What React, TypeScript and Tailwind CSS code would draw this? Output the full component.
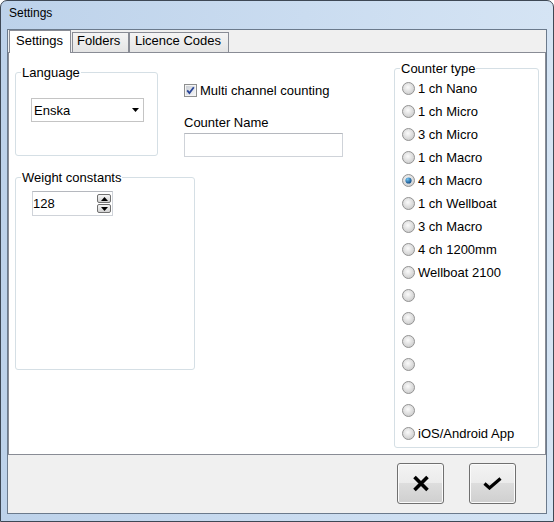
import type { ReactNode } from "react";

const COUNTERS = [
  "1 ch Nano",
  "1 ch Micro",
  "3 ch Micro",
  "1 ch Macro",
  "4 ch Macro",
  "1 ch Wellboat",
  "3 ch Macro",
  "4 ch 1200mm",
  "Wellboat 2100",
  "",
  "",
  "",
  "",
  "",
  "",
  "iOS/Android App",
];
const SELECTED = 4;

// Classic WinForms group box: thin rounded border, caption sitting on the top line.
function Group({ title, className, children }: { title: string; className: string; children?: ReactNode }) {
  return (
    <div className={`shrink-0 rounded-[3px] border border-[#d5dfe5] ${className}`}>
      <div className="-mt-[8px] ml-[5px] w-fit bg-white px-[1px] leading-[16px]">{title}</div>
      {children}
    </div>
  );
}

function Radio({ on }: { on?: boolean }) {
  return (
    <svg width="13" height="13" viewBox="0 0 13 13" className="shrink-0">
      <defs>
        <radialGradient id="rf" cx="0.45" cy="0.4" r="0.6">
          <stop offset="0" stopColor="#fbfbfb" />
          <stop offset="1" stopColor="#cdcdcd" />
        </radialGradient>
        <radialGradient id="rd" cx="0.35" cy="0.3" r="0.75">
          <stop offset="0" stopColor="#74c6f4" />
          <stop offset="1" stopColor="#0a4682" />
        </radialGradient>
      </defs>
      <circle cx="6.5" cy="6.5" r="6" fill="url(#rf)" stroke="#939393" />
      {on && <circle cx="6.5" cy="6.5" r="3.1" fill="url(#rd)" />}
    </svg>
  );
}

function Check() {
  return (
    <svg width="13" height="13" viewBox="0 0 13 13" className="shrink-0">
      <defs>
        <linearGradient id="cb" x1="0" y1="0" x2="1" y2="1">
          <stop offset="0" stopColor="#cbcfd5" />
          <stop offset="1" stopColor="#f4f5f7" />
        </linearGradient>
      </defs>
      <rect x="0.5" y="0.5" width="12" height="12" fill="#f4f4f4" stroke="#8e8f8f" />
      <rect x="2" y="2" width="9" height="9" fill="url(#cb)" />
      <path d="M3.2 6.4 L5.4 9 L9.8 3.2" fill="none" stroke="#2a4698" strokeWidth="1.8" />
    </svg>
  );
}

function SpinBtn({ up }: { up?: boolean }) {
  return (
    <div className="flex h-[9px] w-[14px] items-center justify-center rounded-[2px] border border-[#707070] bg-[linear-gradient(#f6f6f6,#d2d2d2)]">
      <svg width="7" height="4" viewBox="0 0 7 4">
        <path d={up ? "M0 4 L3.5 0 L7 4Z" : "M0 0 L7 0 L3.5 4Z"} fill="#000" />
      </svg>
    </div>
  );
}

function DlgButton({ children, label }: { children: ReactNode; label: string }) {
  return (
    <button
      aria-label={label}
      className="flex h-[41px] w-[47px] items-center justify-center rounded-[3px] border border-[#707070] bg-[linear-gradient(#f3f3f3_0%,#ebebeb_50%,#dddddd_50%,#cfcfcf_100%)] shadow-[inset_0_0_0_1px_#fbfbfb]"
    >
      {children}
    </button>
  );
}

export default function App() {
  return (
    <div className="flex h-[522px] w-[554px] flex-col rounded-t-[7px] border border-[#3e4855] bg-[linear-gradient(to_right,#bdd2ea,#cadcf0_55%,#d5e4f4)] font-['Liberation_Sans',Arial,sans-serif] text-[13px] leading-[15px] text-black">
      <div className="h-[28px] shrink-0 pl-[8px] pt-[5px] text-[12px] leading-[15px]">Settings</div>

      <div className="mx-[6px] flex h-[485px] shrink-0 flex-col border border-[#6b7a8c] bg-[#f0f0f0]">
        {/* tab strip */}
        <div className="flex h-[22px] shrink-0 items-end pl-[1px]">
          <div className="relative z-10 -mb-px h-[23px] w-[62px] border border-b-0 border-[#898c95] bg-white pl-[6px] pt-[2px]">
            Settings
          </div>
          <div className="ml-[1px] h-[20px] w-[57px] border border-b-0 border-[#898c95] bg-[linear-gradient(#f4f4f4,#e4e4e4)] pl-[4px]">
            Folders
          </div>
          <div className="h-[20px] w-[100px] border border-b-0 border-[#898c95] bg-[linear-gradient(#f4f4f4,#e4e4e4)] pl-[5px]">
            Licence Codes
          </div>
        </div>

        {/* tab page */}
        <div className="flex h-[403px] shrink-0 items-start border border-[#898c95] bg-white pl-[6px]">
          <div className="mt-[19px] flex flex-1 flex-col">
            <div className="flex items-start">
              <Group title="Language" className="h-[84px] w-[143px]">
                <div className="ml-[15px] mt-[17px] flex h-[24px] w-[113px] items-center justify-between border border-[#c4c4c4] pl-[2px] pr-[4px]">
                  <span>Enska</span>
                  <svg width="7" height="4" viewBox="0 0 7 4">
                    <path d="M0 0 L7 0 L3.5 4Z" fill="#000" />
                  </svg>
                </div>
              </Group>

              <div className="ml-[26px] mt-[11px] flex flex-col">
                <div className="flex h-[15px] items-center gap-[3px]">
                  <Check />
                  <span>Multi channel counting</span>
                </div>
                <div className="mt-[17px]">Counter Name</div>
                <div className="mt-[3px] h-[24px] w-[159px] border border-[#cfd3d9] border-t-[#b5b8be]" />
              </div>
            </div>

            <Group title="Weight constants" className="mt-[20px] h-[193px] w-[180px]">
              <div className="ml-[16px] mt-[5px] flex h-[25px] w-[81px] items-center justify-between border border-[#cfd3d9] border-t-[#b5b8be] pr-[1px]">
                <span>128</span>
                <div className="flex flex-col gap-[1px]">
                  <SpinBtn up />
                  <SpinBtn />
                </div>
              </div>
            </Group>
          </div>

          <Group title="Counter type" className="mr-[6px] mt-[15px] h-[380px] w-[145px]">
            <div className="flex flex-col">
              {COUNTERS.map((c, i) => (
                <div key={i} className="flex h-[23px] items-center gap-[3px] pl-[7px]">
                  <Radio on={i === SELECTED} />
                  <span>{c}</span>
                </div>
              ))}
            </div>
          </Group>
        </div>

        {/* dialog buttons */}
        <div className="flex flex-1 items-start justify-end gap-[25px] pr-[30px] pt-[8px]">
          <DlgButton label="Cancel">
            <svg width="18" height="17" viewBox="0 0 18 17">
              <path d="M2.5 2 L15.5 15 M15.5 2 L2.5 15" stroke="#000" strokeWidth="3.6" />
            </svg>
          </DlgButton>
          <DlgButton label="OK">
            <svg width="19" height="13" viewBox="0 0 19 13">
              <path d="M1.5 6.5 L6.5 11 L17.5 1.5" fill="none" stroke="#000" strokeWidth="3.2" />
            </svg>
          </DlgButton>
        </div>
      </div>
    </div>
  );
}
